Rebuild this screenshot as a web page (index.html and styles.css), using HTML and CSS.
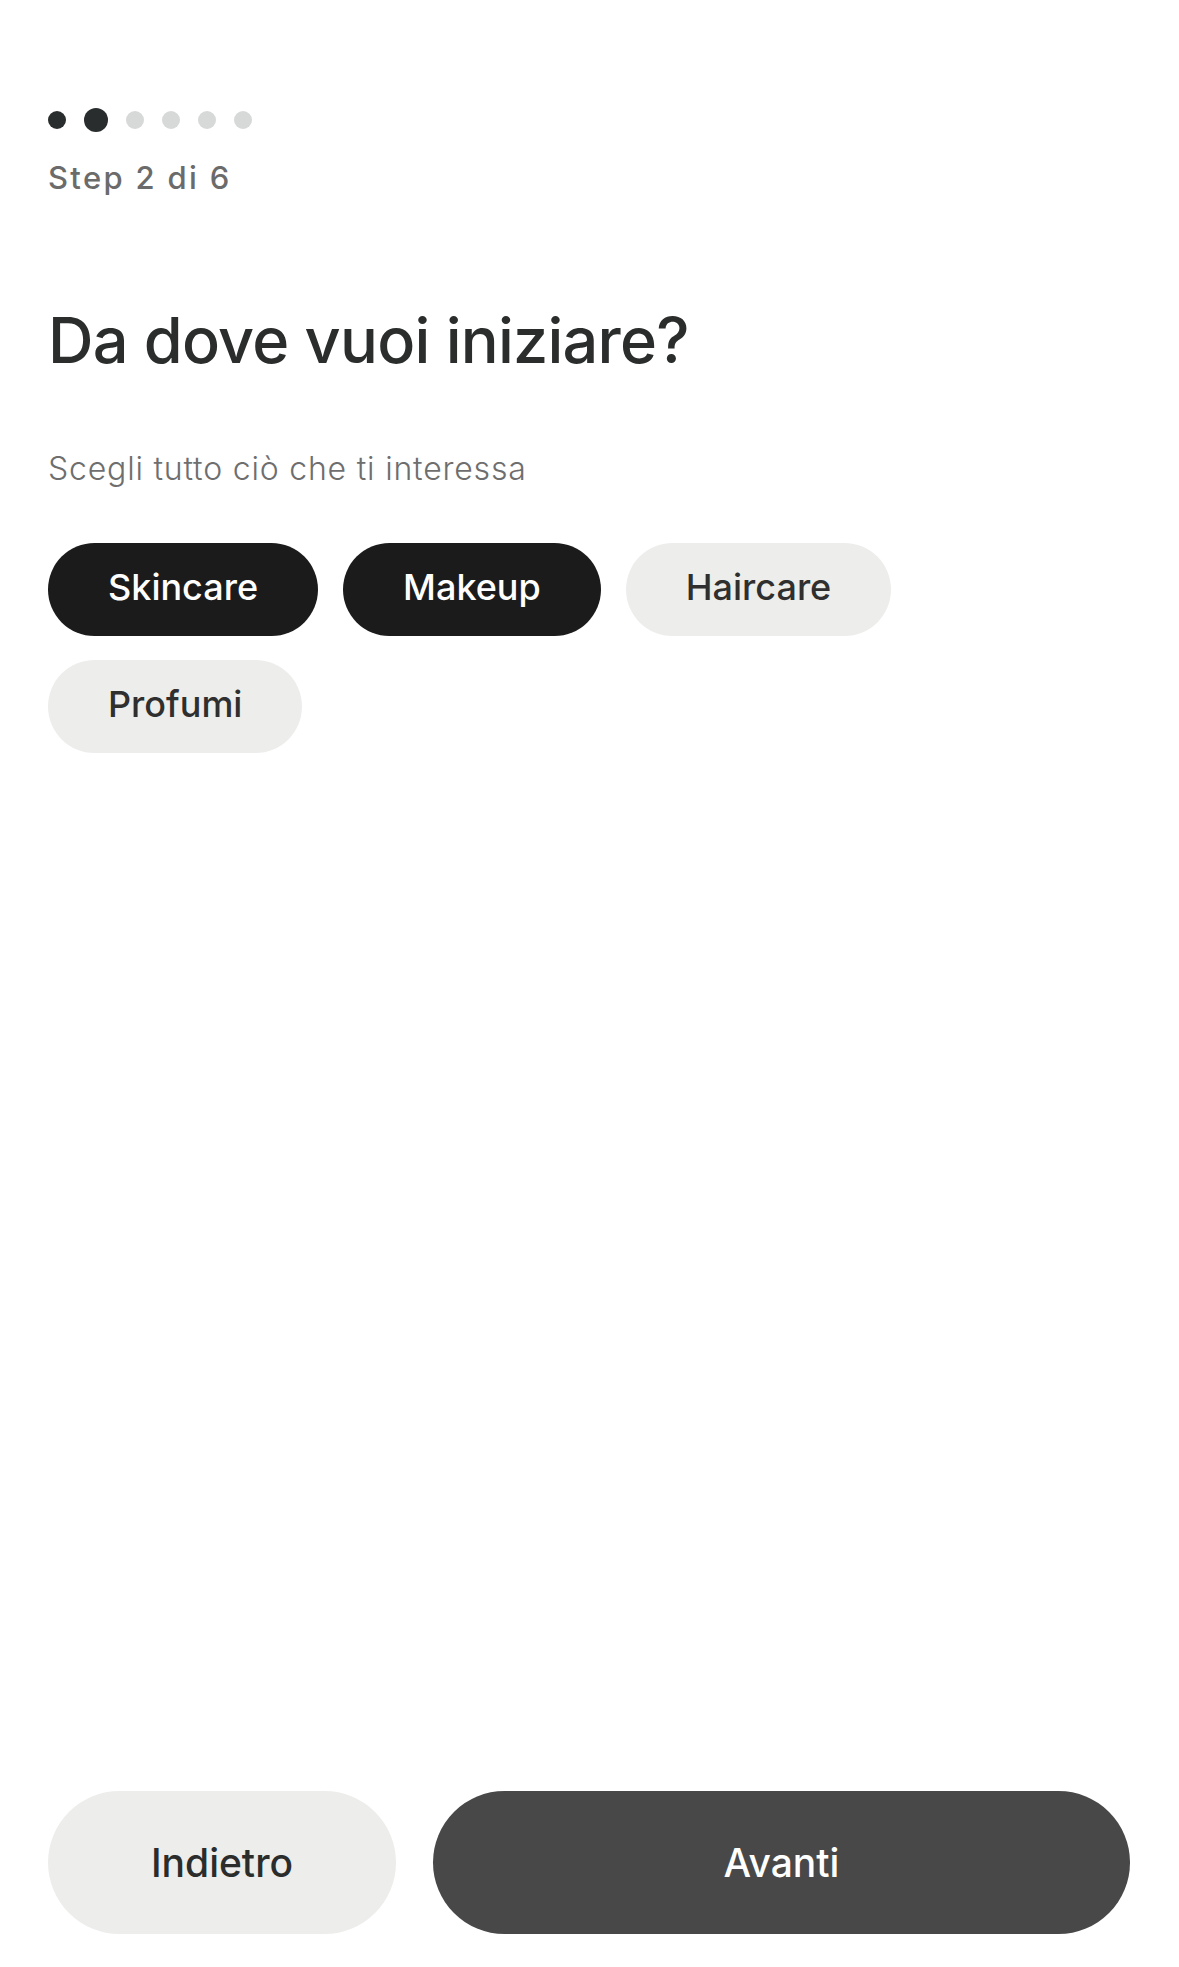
FILE: index.html
```html
<!DOCTYPE html>
<html lang="it">
<head>
<meta charset="utf-8">
<title>Da dove vuoi iniziare?</title>
<link rel="stylesheet" href="styles.css">
</head>
<body>
<main class="screen">
  <div class="progress">
    <span class="dot done"></span>
    <span class="dot current"></span>
    <span class="dot"></span>
    <span class="dot"></span>
    <span class="dot"></span>
    <span class="dot"></span>
  </div>
  <p class="step">Step 2 di 6</p>
  <h1 class="title">Da dove vuoi iniziare?</h1>
  <p class="subtitle">Scegli tutto ciò che ti interessa</p>
  <div class="chips">
    <button class="chip selected">Skincare</button>
    <button class="chip selected">Makeup</button>
    <button class="chip">Haircare</button>
    <button class="chip">Profumi</button>
  </div>
  <footer class="actions">
    <button class="btn btn-back">Indietro</button>
    <button class="btn btn-next">Avanti</button>
  </footer>
</main>
</body>
</html>
```

FILE: styles.css
```css
* {
  box-sizing: border-box;
}

html, body {
  margin: 0;
  padding: 0;
  background: #ffffff;
}

body {
  font-family: Inter, "Noto Sans", sans-serif;
  color: #2b2d2d;
}

.screen {
  min-height: 100vh;
  display: flex;
  flex-direction: column;
  padding: 108px 49px 33px 48px;
}

.progress {
  display: flex;
  align-items: center;
  gap: 18px;
  height: 24px;
}

.dot {
  width: 18px;
  height: 18px;
  border-radius: 50%;
  background: #d6d9d7;
}

.dot.done {
  background: #2a2d2d;
}

.dot.current {
  width: 24px;
  height: 24px;
  background: #2a2d2d;
}

.step {
  margin: 26px 0 0;
  font-size: 31px;
  line-height: 40px;
  font-weight: 500;
  letter-spacing: 0.075em;
  color: #6b6b6b;
}

.title {
  margin: 104px 0 0;
  font-size: 63px;
  line-height: 76px;
  font-weight: 500;
  letter-spacing: -0.012em;
  color: #2b2d2d;
}

.subtitle {
  margin: 71px 0 0;
  font-size: 32px;
  line-height: 40px;
  font-weight: 300;
  letter-spacing: 0.025em;
  color: #6e6e6e;
}

.chips {
  margin-top: 54px;
  display: flex;
  flex-wrap: wrap;
  column-gap: 25px;
  row-gap: 24px;
}

.chip {
  height: 93px;
  padding: 0 60px 6px;
  border: none;
  border-radius: 47px;
  background: #ededeb;
  color: #2f2f2f;
  font-family: Inter, "Noto Sans", sans-serif;
  font-size: 36px;
  font-weight: 500;
}

.chip.selected {
  background: #1b1b1b;
  color: #ffffff;
}

.actions {
  margin-top: auto;
  display: flex;
  gap: 37px;
}

.btn {
  height: 143px;
  padding: 0;
  border: none;
  border-radius: 72px;
  font-family: Inter, "Noto Sans", sans-serif;
  font-size: 39px;
  font-weight: 500;
}

.btn-back {
  flex: 0 0 348px;
  background: #ededeb;
  color: #2b2d2d;
}

.btn-next {
  flex: 1 1 auto;
  background: #484848;
  color: #ffffff;
}
```
